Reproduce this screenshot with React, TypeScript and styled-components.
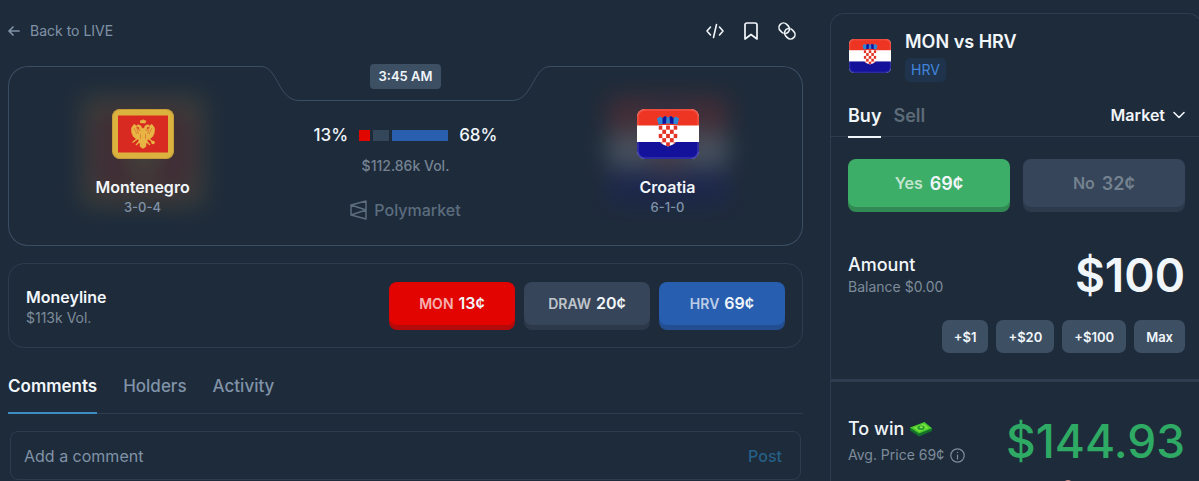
import React from "react";
import styled, { createGlobalStyle } from "styled-components";

const color = {
  page: "#1e2b3a",
  line: "#2d3d4f",
  heroLine: "#3a4e63",
  chip: "#3d4f63",
  text: "#f1f6fa",
  muted: "#8093a8",
  faint: "#758292",
};

const Global = createGlobalStyle`
  * { box-sizing: border-box; }
  body {
    margin: 0;
    background: ${color.page};
    color: ${color.text};
    font-family: Inter, "Liberation Sans", sans-serif;
    font-size: 14px;
    font-weight: 500;
    overflow: hidden;
  }
  button, input, select { font: inherit; color: inherit; background: none; border: 0; padding: 0; margin: 0; outline: 0; }
  button { cursor: pointer; }
  svg { display: block; }
`;

const Page = styled.div`
  display: grid;
  grid-template-columns: minmax(0, 1fr) 372px;
  column-gap: 27px;
  min-height: 100vh;
  margin-right: -3px;
  padding-left: 8px;
`;

const Main = styled.main`
  display: flex;
  flex-direction: column;
  padding-top: 16px;
`;

const TopBar = styled.header`
  display: flex;
  justify-content: space-between;
  align-items: center;
  height: 30px;
  padding-right: 6px;
`;

const BackLink = styled.a`
  display: flex;
  align-items: center;
  gap: 10px;
  font-weight: 400;
  line-height: 16px;
  color: ${color.muted};
  text-decoration: none;
`;

const Actions = styled.div`
  display: flex;
  gap: 16px;
`;

const IconButton = styled.button`
  display: block;
  width: 20px;
  height: 20px;
`;

const Hero = styled.section`
  display: grid;
  grid-template-columns: 1fr 295px 1fr;
  height: 180px;
  margin-top: 20px;
`;

const TeamPanel = styled.div<{ $side: "left" | "right" }>`
  display: flex;
  flex-direction: column;
  align-items: center;
  padding-top: 42px;
  border: 1px solid ${color.heroLine};
  ${(p) =>
    p.$side === "left"
      ? "border-right: 0; border-radius: 20px 0 0 20px; padding-left: 18px;"
      : "border-left: 0; border-radius: 0 20px 20px 0; padding-right: 20px;"}
`;

const FlagBox = styled.div`
  position: relative;
  width: 62px;
  height: 50px;
  margin-bottom: 18px;
`;

const Glow = styled.div`
  position: absolute;
  inset: -12px -29px -46px;
  filter: blur(12px);
  opacity: 0.18;
`;

const FlagFront = styled.div`
  position: relative;
  height: 100%;
  border-radius: 8px;
  overflow: hidden;
`;

const TeamName = styled.strong`
  position: relative;
  font-size: 16px;
  line-height: 20px;
  font-weight: 600;
`;

const TeamRecord = styled.span`
  position: relative;
  font-size: 13px;
  line-height: 20px;
  color: ${color.muted};
`;

const HeroCenter = styled.div`
  position: relative;
  display: flex;
  flex-direction: column;
  align-items: center;
  border-bottom: 1px solid ${color.heroLine};
`;

const Notch = styled.svg`
  position: absolute;
  top: 0;
  left: 0;
`;

const TimeBadge = styled.time`
  position: relative;
  margin-top: -2px;
  padding: 0 9px;
  border-radius: 4px;
  background: ${color.chip};
  font-size: 13px;
  line-height: 25px;
  font-weight: 600;
`;

const OddsRow = styled.div`
  display: flex;
  align-items: center;
  gap: 11px;
  margin-top: 35px;
  font-size: 17px;
  line-height: 22px;
`;

const OddsBar = styled.div`
  display: flex;
  gap: 3px;
  width: 89px;
  height: 11px;
`;

const OddsPart = styled.i<{ $share: number; $fill: string }>`
  flex: ${(p) => p.$share} 1 0;
  background: ${(p) => p.$fill};
`;

const Volume = styled.span`
  margin-top: 10px;
  line-height: 20px;
  color: ${color.faint};
`;

const Brand = styled.div`
  display: flex;
  align-items: center;
  gap: 7px;
  margin-top: 23px;
  font-size: 16px;
  line-height: 22px;
  color: #5c6d7f;
`;

const MarketCard = styled.section`
  display: flex;
  justify-content: space-between;
  align-items: center;
  height: 85px;
  margin-top: 17px;
  padding: 0 17px;
  border: 1px solid ${color.line};
  border-radius: 16px;
`;

const MarketTitle = styled.h2`
  margin: 2px 0 0;
  font-size: 16px;
  line-height: 22px;
  font-weight: 600;
`;

const Small = styled.div`
  display: flex;
  align-items: center;
  gap: 6px;
  font-weight: 400;
  line-height: 20px;
  color: #7d8b9b;
`;

const Outcomes = styled.div`
  display: flex;
  gap: 9px;
`;

const OutcomeButton = styled.button<{ $face: string; $edge: string; $big?: boolean; $dim?: boolean }>`
  display: flex;
  justify-content: center;
  align-items: center;
  gap: ${(p) => (p.$big ? 7 : 5)}px;
  flex: ${(p) => (p.$big ? "1" : "0 0 126px")};
  height: ${(p) => (p.$big ? 48 : 43)}px;
  margin-bottom: 5px;
  border-radius: 8px;
  background: ${(p) => p.$face};
  box-shadow: 0 5px 0 ${(p) => p.$edge};
  font-size: ${(p) => (p.$big ? 16 : 14)}px;
  font-weight: 600;
  color: ${(p) => (p.$dim ? "#74818f" : "rgba(255,255,255,.7)")};

  b {
    font-size: ${(p) => (p.$big ? 18 : 16)}px;
    font-weight: 600;
    color: ${(p) => (p.$dim ? "#74818f" : color.text)};
  }
`;

const Tabs = styled.nav`
  display: flex;
  gap: 26px;
  height: 51px;
  margin-top: 15px;
  border-bottom: 1px solid ${color.line};
`;

const Tab = styled.button<{ $active?: boolean }>`
  height: 51px;
  padding-bottom: 4px;
  border-bottom: 2px solid ${(p) => (p.$active ? "#3d8cc4" : "transparent")};
  font-size: 17px;
  font-weight: ${(p) => (p.$active ? 600 : 500)};
  color: ${(p) => (p.$active ? color.text : color.muted)};
`;

const CommentForm = styled.form`
  display: flex;
  align-items: center;
  height: 49px;
  margin: 17px 2px 0;
  padding: 0 18px 0 13px;
  border: 1px solid ${color.line};
  border-radius: 8px;
  font-size: 16px;

  input { flex: 1; min-width: 0; font-weight: 400; }
  input::placeholder { color: ${color.muted}; opacity: 1; }
  button { color: #245f85; }
`;

const Ticket = styled.aside`
  position: relative;
  margin-top: 13px;
  border: 1px solid ${color.line};
  border-bottom: 0;
  border-radius: 14px 14px 0 0;
`;

const TicketHead = styled.header`
  display: flex;
  align-items: center;
  gap: 14px;
  padding: 16px 16px 0 18px;

  h1 { margin: 0 0 4px; font-size: 18px; line-height: 24px; font-weight: 600; }
`;

const SmallFlag = styled.div`
  width: 42px;
  height: 34px;
  border-radius: 5px;
  overflow: hidden;
`;

const Tag = styled.span`
  display: block;
  width: fit-content;
  padding: 0 6px;
  border-radius: 5px;
  background: #1f344c;
  color: #4284dc;
  font-size: 14px;
  font-weight: 400;
  line-height: 24px;
`;

const SideTabs = styled.div`
  display: flex;
  align-items: center;
  gap: 12px;
  height: 43px;
  margin-top: 12px;
  padding: 0 16px 0 17px;
  border-bottom: 1px solid ${color.line};
`;

const SideTab = styled.button<{ $active?: boolean }>`
  align-self: stretch;
  height: 44px;
  border-bottom: 2px solid ${(p) => (p.$active ? color.text : "transparent")};
  font-size: 18px;
  font-weight: 600;
  color: ${(p) => (p.$active ? color.text : "#5d6b79")};
`;

const OrderType = styled.label`
  display: flex;
  align-items: center;
  gap: 8px;
  margin-left: auto;

  select { appearance: none; font-size: 16px; font-weight: 600; field-sizing: content; }
`;

const SideOutcomes = styled.div`
  display: flex;
  gap: 13px;
  padding: 22px 16px 0 17px;
`;

const Line = styled.div<{ $top: number }>`
  display: flex;
  justify-content: space-between;
  align-items: center;
  padding: ${(p) => p.$top}px 16px 0 17px;
`;

const LineLabel = styled.div<{ $gap?: number }>`
  display: grid;
  row-gap: ${(p) => p.$gap ?? 0}px;
`;

const LineTitle = styled.div`
  display: flex;
  align-items: center;
  gap: 5px;
  font-size: 18px;
  line-height: 24px;
`;

const AmountInput = styled.input`
  width: 180px;
  height: 58px;
  text-align: right;
  font-size: 46px;
  font-weight: 600;
`;

const Payout = styled.output`
  font-size: 46px;
  line-height: 58px;
  color: #2eaa64;
`;

const Chips = styled.div`
  display: flex;
  justify-content: flex-end;
  gap: 8px;
  padding: 16px 16px 26px;
  border-bottom: 3px solid ${color.line};
`;

const Chip = styled.button`
  height: 33px;
  padding: 0 12px;
  border-radius: 7px;
  background: ${color.chip};
  font-size: 13px;
  font-weight: 600;
`;

const Dot = styled.i`
  position: absolute;
  left: 232px;
  top: 466px;
  width: 10px;
  height: 10px;
  border-radius: 50%;
  background: #c98a86;
`;

const stroke = { fill: "none", stroke: "currentColor", strokeLinecap: "round", strokeLinejoin: "round" } as const;

const MontenegroFlag = () => (
  <svg width="100%" height="100%" viewBox="0 0 62 50" preserveAspectRatio="none">
    <rect width="62" height="50" fill="#dcb23f" />
    <rect x="6" y="6.500" width="50" height="37" fill="#d82a20" />
    <g fill="#e8b545" stroke="#e8b545" strokeLinejoin="round" strokeWidth=".6">
      <path d="M31 10.500l1 1 1.800.2-.4 2.200h-4.800l-.4-2.200 1.800-.2z" />
      <path d="M30 21c0-3-1-5-4-5.200l-2 1.500 2.600.6c1 .4 1 1.500 0 2.600zM32 21c0-3 1-5 4-5.200l2 1.500-2.600.6c-1 .4-1 1.500 0 2.600z" />
      <path d="M31 19l3 3c2.200-.4 3-3.600 5-6.500 1.400-.2 3 2 3.600 4.500l-.4 4-1.600 3.600-3 2.400-2.600.6.400 3-1.600.8.200 3-3 2-3-2 .2-3-1.600-.8.400-3-2.600-.6-3-2.400-1.600-3.600-.4-4c.6-2.500 2.200-4.700 3.600-4.500 2 2.900 2.800 6.100 5 6.500z" />
    </g>
    <path d="M25 30l-4.500 3.500M37 30l4.500 3.500M28 32l-4 4M34 32l4 4" stroke="#e8b545" strokeWidth="1.400" />
    <circle cx="41" cy="33.500" r="1.800" fill="#e8b545" />
    <path d="M22 19l3 6M24.500 18l2 7M40 19l-3 6M37.500 18l-2 7M28.500 25v5M33.500 25v5" stroke="#d8632c" strokeWidth=".6" />
    <rect x=".5" y=".5" width="61" height="49" rx="8" fill="none" stroke="#b98f3b" strokeOpacity=".6" />
  </svg>
);

const checks: [number, number][] = [];
for (let r = 0; r < 5; r++) for (let c = 0; c < 5; c++) if ((r + c) % 2 === 0) checks.push([c, r]);

const CroatiaFlag = ({ id }: { id: string }) => (
  <svg width="100%" height="100%" viewBox="0 0 62 50" preserveAspectRatio="none">
    <rect width="62" height="50" fill="#fff" />
    <rect width="62" height="16.500" fill="#ee3524" />
    <rect y="33" width="62" height="17" fill="#14129a" />
    <clipPath id={id}>
      <path d="M21.500 16h19v12q0 5-4.500 7.500l-5 2-5-2q-4.500-2.500-4.500-7.500z" />
    </clipPath>
    <g clipPath={`url(#${id})`}>
      <rect x="21" y="15" width="20" height="24" fill="#fff" />
      {checks.map(([c, r]) => (
        <rect key={`${c}-${r}`} x={21.5 + c * 3.8} y={16.5 + r * 4.2} width="3.8" height="4.200" fill="#e23326" />
      ))}
    </g>
    <path d="M21.500 15.500L20 9.500l3-2 2.500 1.500 2.500-2 3 1.500 3-1.500 2.500 2L39 7.500l3 2-1.500 6q-9.500-2-19 0z" fill="#2f86d2" />
    <path d="M25.500 9l2.500-2 1.500 1-.5 6.500-3.500.5zM36.500 9L34 7l-1.500 1 .5 6.500 3.500.5z" fill="#14129a" />
    <rect x="1" y="1" width="60" height="48" rx="7" fill="none" stroke="#fff" strokeOpacity=".15" strokeWidth="1.500" />
  </svg>
);

const Chevron = () => (
  <svg width="12" height="8" viewBox="0 0 12 8" {...stroke} strokeWidth="1.600"><path d="M1 1.500l5 5 5-5" /></svg>
);

const ring = "M.93 2.520A4.500 4.500 0 0 0-2.800-4.500H-4.950A4.500 4.500 0 0 0-4.950 4.500H-2.800A4.500 4.500 0 0 0-1.400 4.280";

const LinkIcon = () => (
  <svg width="20" height="20" viewBox="0 0 20 20" {...stroke} strokeWidth="1.600">
    <g transform="translate(10 10) rotate(45)">
      <path d={ring} />
      <path d={ring} transform="rotate(180)" />
    </g>
  </svg>
);

const Cash = () => (
  <svg width="24" height="16" viewBox="0 0 24 16">
    <path d="M1 6v3.500L10 15.500l13-5.500V7z" fill="#14702a" />
    <path d="M1 6.500L15.500 1 23 7.200 10 12.500z" fill="#45c82c" />
    <path d="M4 6.600l11-4.100 5.200 4.500L10.200 11z" fill="#74df3a" />
    <ellipse cx="12" cy="6.700" rx="3.600" ry="2.200" fill="#239a2c" />
    <ellipse cx="12.200" cy="6.300" rx="1.700" ry="1" fill="#8aea4e" />
  </svg>
);

export default function App() {
  return (
    <>
      <Global />
      <Page>
        <Main>
          <TopBar>
            <BackLink href="#live">
              <svg width="12" height="12" viewBox="0 0 12 12" {...stroke} strokeWidth="1.700"><path d="M11 6H1.500M5 2L1 6l4 4" /></svg>
              Back to LIVE
            </BackLink>
            <Actions>
              <IconButton aria-label="Embed">
                <svg width="20" height="20" viewBox="0 0 20 20" {...stroke} strokeWidth="1.600"><path d="M5.500 6L2 10l3.500 4M14.500 6l3.500 4-3.500 4M11.500 3.500l-3 13" /></svg>
              </IconButton>
              <IconButton aria-label="Bookmark">
                <svg width="20" height="20" viewBox="0 0 20 20" {...stroke} strokeWidth="1.700"><path d="M4 4q0-2 2-2h8q2 0 2 2v14l-6-4.500L4 18z" /></svg>
              </IconButton>
              <IconButton aria-label="Copy link">
                <LinkIcon />
              </IconButton>
            </Actions>
          </TopBar>

          <Hero>
            <TeamPanel $side="left">
              <FlagBox>
                <Glow><MontenegroFlag /></Glow>
                <FlagFront><MontenegroFlag /></FlagFront>
              </FlagBox>
              <TeamName>Montenegro</TeamName>
              <TeamRecord>3-0-4</TeamRecord>
            </TeamPanel>
            <HeroCenter>
              <Notch width="295" height="36" viewBox="0 0 295 36" fill="none" stroke={color.heroLine}>
                <path d="M0 .5h3C20 .5 20 34.500 41 34.500H254C275 34.500 275 .5 292 .5h3" />
              </Notch>
              <TimeBadge>3:45 AM</TimeBadge>
              <OddsRow>
                <span>13%</span>
                <OddsBar>
                  <OddsPart $share={11} $fill="#e10600" />
                  <OddsPart $share={16} $fill="#34475a" />
                  <OddsPart $share={57} $fill="#2a5fb0" />
                </OddsBar>
                <span>68%</span>
              </OddsRow>
              <Volume>$112.86k Vol.</Volume>
              <Brand>
                <svg width="17" height="20" viewBox="0 0 17 20" {...stroke} strokeWidth="1.500"><path d="M1 5l15-4v18L1 15zl15 5M1 15l15-5" /></svg>
                Polymarket
              </Brand>
            </HeroCenter>
            <TeamPanel $side="right">
              <FlagBox>
                <Glow><CroatiaFlag id="shield-glow" /></Glow>
                <FlagFront><CroatiaFlag id="shield-team" /></FlagFront>
              </FlagBox>
              <TeamName>Croatia</TeamName>
              <TeamRecord>6-1-0</TeamRecord>
            </TeamPanel>
          </Hero>

          <MarketCard>
            <div>
              <MarketTitle>Moneyline</MarketTitle>
              <Small>$113k Vol.</Small>
            </div>
            <Outcomes>
              <OutcomeButton $face="#e20400" $edge="#b50a0c">MON <b>13¢</b></OutcomeButton>
              <OutcomeButton $face="#364559" $edge="#2b394a">DRAW <b>20¢</b></OutcomeButton>
              <OutcomeButton $face="#285eb0" $edge="#234f92">HRV <b>69¢</b></OutcomeButton>
            </Outcomes>
          </MarketCard>

          <Tabs>
            <Tab $active>Comments</Tab>
            <Tab>Holders</Tab>
            <Tab>Activity</Tab>
          </Tabs>

          <CommentForm>
            <input aria-label="Add a comment" placeholder="Add a comment" />
            <button type="button">Post</button>
          </CommentForm>
        </Main>

        <Ticket>
          <TicketHead>
            <SmallFlag><CroatiaFlag id="shield-ticket" /></SmallFlag>
            <div>
              <h1>MON vs HRV</h1>
              <Tag>HRV</Tag>
            </div>
          </TicketHead>
          <SideTabs>
            <SideTab $active>Buy</SideTab>
            <SideTab>Sell</SideTab>
            <OrderType>
              <select aria-label="Order type" defaultValue="Market"><option>Market</option></select>
              <Chevron />
            </OrderType>
          </SideTabs>
          <SideOutcomes>
            <OutcomeButton $big $face="#3dae67" $edge="#318a53">Yes <b>69¢</b></OutcomeButton>
            <OutcomeButton $big $dim $face="#364559" $edge="#2d3a4c">No <b>32¢</b></OutcomeButton>
          </SideOutcomes>
          <Line $top={34}>
            <LineLabel>
              <LineTitle>Amount</LineTitle>
              <Small>Balance $0.00</Small>
            </LineLabel>
            <AmountInput aria-label="Amount" defaultValue="$100" />
          </Line>
          <Chips>
            <Chip>+$1</Chip>
            <Chip>+$20</Chip>
            <Chip>+$100</Chip>
            <Chip>Max</Chip>
          </Chips>
          <Line $top={30}>
            <LineLabel $gap={4}>
              <LineTitle>To win <Cash /></LineTitle>
              <Small>
                Avg. Price 69¢
                <svg width="15" height="15" viewBox="0 0 15 15" {...stroke} strokeWidth="1.200"><circle cx="7.500" cy="7.500" r="6.700" /><path d="M7.500 7v4M7.500 4.300v.2" /></svg>
              </Small>
            </LineLabel>
            <Payout>$144.93</Payout>
          </Line>
          <Dot />
        </Ticket>
      </Page>
    </>
  );
}
